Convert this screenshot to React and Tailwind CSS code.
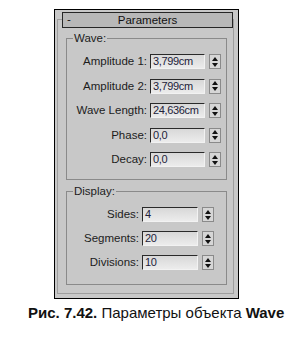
import React from "react";

function Spinner() {
  return (
    <div className="ml-[4px] w-[12px] h-[15px] border border-[#8a8a8a] bg-[#d6d6d6] flex flex-col items-center justify-center gap-[2px]">
      <svg width="6" height="4" viewBox="0 0 6 4"><path d="M3 0 L6 4 L0 4 Z" fill="#111" /></svg>
      <svg width="6" height="4" viewBox="0 0 6 4"><path d="M0 0 L6 0 L3 4 Z" fill="#111" /></svg>
    </div>
  );
}

function Row({ label, value, w }) {
  return (
    <div className="flex items-center justify-end h-[15px]">
      <span className="text-[11.5px] leading-[13px] text-[#1c1c1c] mr-[3px] whitespace-nowrap">{label}</span>
      <div className={`${w} h-[15px] overflow-hidden border-t border-l border-t-[#2a2a2a] border-l-[#2a2a2a] border-b border-r border-b-[#f2f2f2] border-r-[#f2f2f2] bg-gradient-to-b from-[#d8d8d8] to-[#ececec] flex items-center pl-[2px]`}>
        <span className="text-[11px] leading-[13px] tracking-[-0.35px] text-[#22223a] whitespace-nowrap">{value}</span>
      </div>
      <Spinner />
    </div>
  );
}

export default function App() {
  return (
    <div className="w-[298px] h-[339px] bg-white overflow-hidden font-['Liberation_Sans',Arial,sans-serif]">
      <div className="ml-[54px] mt-[9px] w-[185px] h-[290px] border border-black bg-[#c8c8c8] pl-[2px] pr-[4px] pt-[9px] pb-[4px]">
        <div className="h-full border border-[#9e9e9e]">
          <div className="-mt-[8px] ml-[4px] h-[16px] border border-[#262626] bg-[#b8b8b8] flex items-center relative">
            <span className="absolute left-[4px] top-[0px] text-[11.5px] leading-[13px] text-[#111]">-</span>
            <span className="mx-auto text-[11.5px] leading-[13px] text-[#111]">Parameters</span>
          </div>

          <fieldset className="mt-[4px] ml-[8px] mr-[6px] border border-[#8a8a8a] pr-[5px] pt-[9px] pb-[12px]">
            <legend className="ml-[6px] px-[1px] text-[11.5px] leading-[13px] text-[#1c1c1c]">Wave:</legend>
            <div className="flex flex-col gap-[9.5px]">
              <Row label="Amplitude 1:" value="3,799cm" w="w-[55px]" />
              <Row label="Amplitude 2:" value="3,799cm" w="w-[55px]" />
              <Row label="Wave Length:" value="24,636cm" w="w-[55px]" />
              <Row label="Phase:" value="0,0" w="w-[55px]" />
              <Row label="Decay:" value="0,0" w="w-[55px]" />
            </div>
          </fieldset>

          <fieldset className="mt-[5px] ml-[8px] mr-[6px] border border-[#8a8a8a] pr-[12px] pt-[9px] pb-[14px]">
            <legend className="ml-[6px] px-[1px] text-[11.5px] leading-[13px] text-[#1c1c1c]">Display:</legend>
            <div className="flex flex-col gap-[9px]">
              <Row label="Sides:" value="4" w="w-[56px]" />
              <Row label="Segments:" value="20" w="w-[56px]" />
              <Row label="Divisions:" value="10" w="w-[56px]" />
            </div>
          </fieldset>
        </div>
      </div>
      <div className="mt-[6px] pl-[28px] text-[15px] leading-[16px] text-[#111] whitespace-nowrap">
        <span className="font-bold">Рис. 7.42.</span> Параметры объекта <span className="font-bold">Wave</span>
      </div>
    </div>
  );
}
